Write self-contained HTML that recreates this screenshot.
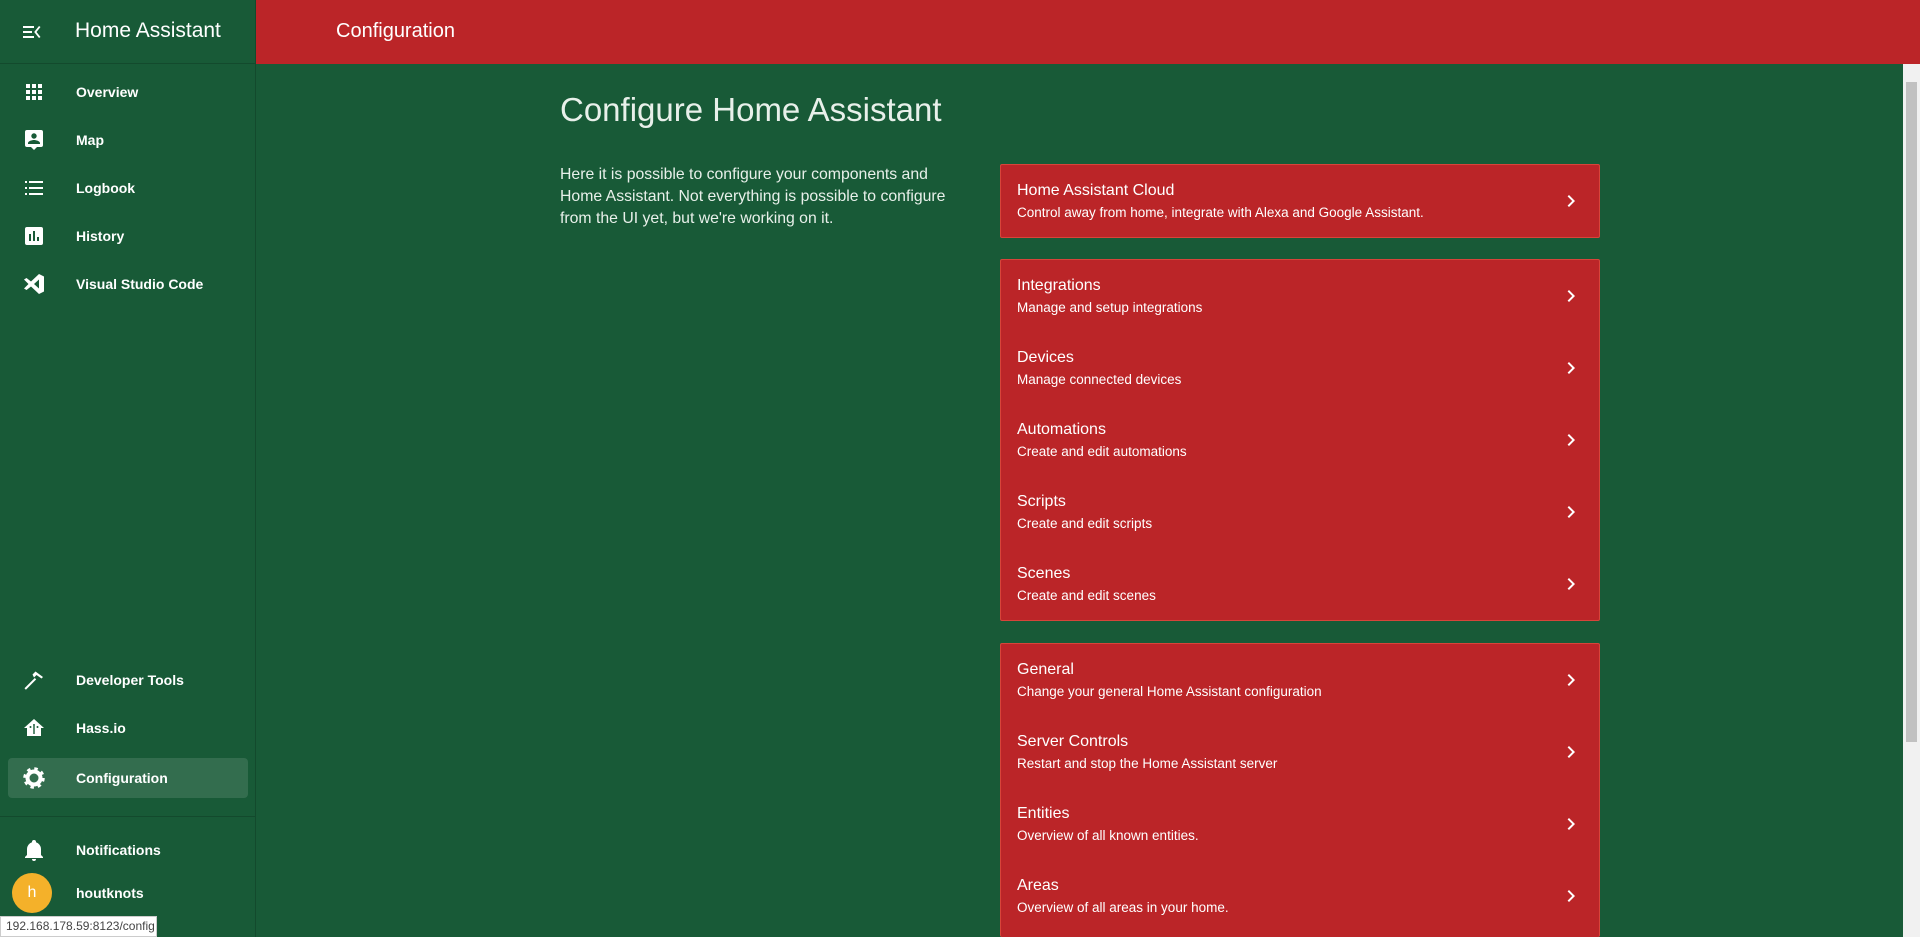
<!DOCTYPE html>
<html style="overflow:hidden;width:1920px;height:937px"><head><style>
*{box-sizing:border-box;margin:0;padding:0}
html,body{overflow:hidden}
body{width:1920px;height:937px;background:#185a37;font-family:"Liberation Sans",Roboto,sans-serif;color:#fff;position:relative}
.side{position:absolute;left:0;top:0;width:256px;height:937px;background:#185a37;border-right:1px solid #134a2d}
.sh{height:64px;border-bottom:1px solid #134a2d;display:flex;align-items:center}
.sh .t{position:absolute;left:75px;top:19px;font-size:21px}
.it{position:absolute;left:8px;width:240px;height:40px;display:flex;align-items:center;font-size:14px;font-weight:bold;border-radius:4px}
.it svg{position:absolute;left:14px;width:24px;height:24px;fill:#fff}
.it span{position:absolute;left:68px}
.top{position:absolute;left:256px;top:0;width:1664px;height:64px;background:#bb2528}
.top span{position:absolute;left:80px;top:20px;font-size:20px}
h1{position:absolute;left:560px;top:91px;font-size:33px;font-weight:normal;color:#e8f0ea}
.desc{position:absolute;left:560px;top:164px;width:410px;font-size:15.8px;line-height:22px;color:#e8f0ea}
.card{position:absolute;left:1000px;width:600px;background:#bb2528;border:1px solid #d8443a;border-radius:2px;overflow:hidden}
.ci{height:72px;position:relative;padding:14px 16px}
.ci b{display:block;font-weight:normal;font-size:16px;line-height:24px}
.ci i{display:block;font-style:normal;font-size:13.5px;line-height:20px}
.ci svg{position:absolute;right:16px;top:24px;width:24px;height:24px;fill:#fff}
.sb{position:absolute;right:0;top:64px;width:17px;height:873px;background:#f1f1f1}
.sb div{position:absolute;left:3px;top:18px;width:11px;height:660px;background:#c1c1c1}
</style></head><body>
<div class="side">
<div class="sh"><svg style="position:absolute;left:20px;top:20px;width:24px;height:24px;fill:#fff" viewBox="0 0 24 24"><path d="M3 6h11v2H3zm0 5h9v2H3zm0 5h11v2H3zm17.5-9l-4 5 4 5-1.5 1-4.8-6 4.8-6z"/></svg><span class="t">Home Assistant</span></div>
<div class="it" style="top:72px"><svg viewBox="0 0 24 24"><path d="M4 4h4v4H4zm6 0h4v4h-4zm6 0h4v4h-4zM4 10h4v4H4zm6 0h4v4h-4zm6 0h4v4h-4zM4 16h4v4H4zm6 0h4v4h-4zm6 0h4v4h-4z"/></svg><span>Overview</span></div>
<div class="it" style="top:120px"><svg viewBox="0 0 24 24"><path d="M19 2H5a2 2 0 0 0-2 2v13a2 2 0 0 0 2 2h4l3 3 3-3h4a2 2 0 0 0 2-2V4a2 2 0 0 0-2-2zm-7 3.3a2.7 2.7 0 1 1 0 5.4 2.7 2.7 0 0 1 0-5.4zM18 16H6v-.9c0-2 4-3.1 6-3.1s6 1.1 6 3.1z"/></svg><span>Map</span></div>
<div class="it" style="top:168px"><svg viewBox="0 0 24 24"><path d="M7 5h14v2H7zm0 6h14v2H7zm0 6h14v2H7zM3 5h2v2H3zm0 6h2v2H3zm0 6h2v2H3z"/></svg><span>Logbook</span></div>
<div class="it" style="top:216px"><svg viewBox="0 0 24 24"><path d="M19 3H5a2 2 0 0 0-2 2v14a2 2 0 0 0 2 2h14a2 2 0 0 0 2-2V5a2 2 0 0 0-2-2zM9 17H7v-7h2zm4 0h-2V7h2zm4 0h-2v-4h2z"/></svg><span>History</span></div>
<div class="it" style="top:264px"><svg viewBox="0 0 24 24"><path d="M17 2l5 2.5v15L17 22l-8-7.5-4.5 3.5L2 16.5 6.5 12 2 7.5 4.5 6 9 9.5zM17 7.5L12 12l5 4.5z"/></svg><span>Visual Studio Code</span></div>
<div class="it" style="top:660px"><svg viewBox="0 0 24 24"><path d="M2.5 20.3l10.3-10.3 1.4 1.4L3.9 21.7zM10.5 6.5l3-3 7.5 5.5-1.5 1.5-5-3.5-2.5 2.5z"/></svg><span>Developer Tools</span></div>
<div class="it" style="top:708px"><svg viewBox="0 0 24 24"><path d="M12 3L2 12h3v8h14v-8h3zm0 5a1 1 0 1 1 0 2 1 1 0 0 1 0-2zm-3.5 2a1 1 0 1 1 0 2 1 1 0 0 1 0-2zm7 0a1 1 0 1 1 0 2 1 1 0 0 1 0-2zM11.3 10h1.4v8h-1.4z"/></svg><span>Hass.io</span></div>
<div class="it" style="top:758px;background:#336d4e"><svg viewBox="0 0 24 24"><circle cx="12" cy="12" r="6.5" fill="none" stroke="#fff" stroke-width="4"/><circle cx="12" cy="12" r="9" fill="none" stroke="#fff" stroke-width="3.5" stroke-dasharray="3.3 3.77"/></svg><span>Configuration</span></div>
<div style="position:absolute;left:0;top:816px;width:256px;border-top:1px solid #134a2d"></div>
<div class="it" style="top:830px"><svg viewBox="0 0 24 24"><path d="M10 21h4a2 2 0 0 1-4 0zm11-2v1H3v-1l2-2v-6a7 7 0 0 1 5-6.7V4a2 2 0 0 1 4 0v.3a7 7 0 0 1 5 6.7v6z"/></svg><span>Notifications</span></div>
<div style="position:absolute;left:12px;top:873px;width:40px;height:40px;border-radius:50%;background:#f4b12a;text-align:center;line-height:40px;font-size:16px">h</div>
<div class="it" style="top:873px"><span>houtknots</span></div>
</div>
<div class="top"><span>Configuration</span></div>
<h1>Configure Home Assistant</h1>
<div class="desc">Here it is possible to configure your components and Home Assistant. Not everything is possible to configure from the UI yet, but we're working on it.</div>
<div class="card" style="top:164px"><div class="ci"><b>Home Assistant Cloud</b><i>Control away from home, integrate with Alexa and Google Assistant.</i><svg viewBox="0 0 24 24"><path d="M8.6 16.6L13.2 12 8.6 7.4 10 6l6 6-6 6z"/></svg></div></div>
<div class="card" style="top:259px">
<div class="ci"><b>Integrations</b><i>Manage and setup integrations</i><svg viewBox="0 0 24 24"><path d="M8.6 16.6L13.2 12 8.6 7.4 10 6l6 6-6 6z"/></svg></div>
<div class="ci"><b>Devices</b><i>Manage connected devices</i><svg viewBox="0 0 24 24"><path d="M8.6 16.6L13.2 12 8.6 7.4 10 6l6 6-6 6z"/></svg></div>
<div class="ci"><b>Automations</b><i>Create and edit automations</i><svg viewBox="0 0 24 24"><path d="M8.6 16.6L13.2 12 8.6 7.4 10 6l6 6-6 6z"/></svg></div>
<div class="ci"><b>Scripts</b><i>Create and edit scripts</i><svg viewBox="0 0 24 24"><path d="M8.6 16.6L13.2 12 8.6 7.4 10 6l6 6-6 6z"/></svg></div>
<div class="ci"><b>Scenes</b><i>Create and edit scenes</i><svg viewBox="0 0 24 24"><path d="M8.6 16.6L13.2 12 8.6 7.4 10 6l6 6-6 6z"/></svg></div>
</div>
<div class="card" style="top:643px;height:294px;border-bottom:none">
<div class="ci"><b>General</b><i>Change your general Home Assistant configuration</i><svg viewBox="0 0 24 24"><path d="M8.6 16.6L13.2 12 8.6 7.4 10 6l6 6-6 6z"/></svg></div>
<div class="ci"><b>Server Controls</b><i>Restart and stop the Home Assistant server</i><svg viewBox="0 0 24 24"><path d="M8.6 16.6L13.2 12 8.6 7.4 10 6l6 6-6 6z"/></svg></div>
<div class="ci"><b>Entities</b><i>Overview of all known entities.</i><svg viewBox="0 0 24 24"><path d="M8.6 16.6L13.2 12 8.6 7.4 10 6l6 6-6 6z"/></svg></div>
<div class="ci"><b>Areas</b><i>Overview of all areas in your home.</i><svg viewBox="0 0 24 24"><path d="M8.6 16.6L13.2 12 8.6 7.4 10 6l6 6-6 6z"/></svg></div>
</div>
<div class="sb"><div></div></div>
<div style="position:absolute;left:0;top:916px;width:157px;height:21px;background:#fff;border:1px solid #ccc;color:#444;font-size:12px;line-height:19px;padding-left:5px">192.168.178.59:8123/config</div>
</body></html>
